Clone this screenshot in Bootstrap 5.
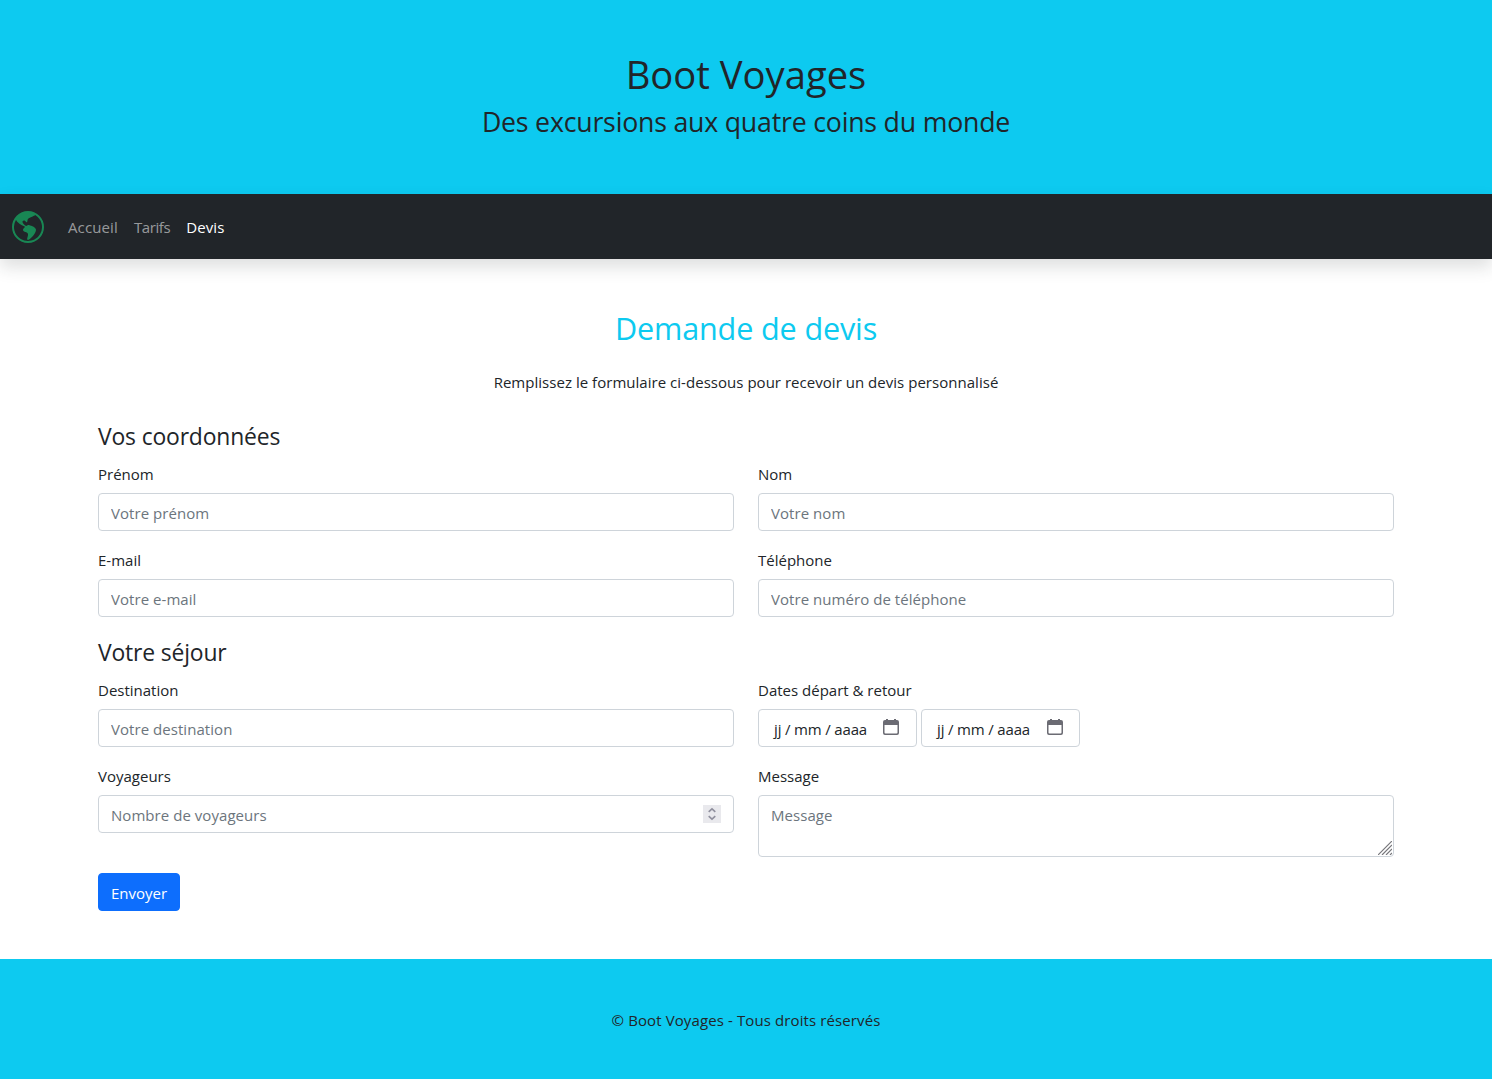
<!DOCTYPE html>
<html lang="fr">
<head>
<meta charset="utf-8">
<meta name="viewport" content="width=device-width, initial-scale=1">
<title>Boot Voyages - Devis</title>
<link href="https://cdn.jsdelivr.net/npm/bootstrap@5.3.0/dist/css/bootstrap.min.css" rel="stylesheet">
<style>
  body { font-family: "Open Sans", "Noto Sans", sans-serif; font-size: 15px; line-height: 24px; color: #212529; overflow-x: hidden; }
  .site-title { font-size: 38.2px; line-height: 44px; padding-top: 4px; font-weight: 400; }
  .site-tagline { font-size: 26.7px; line-height: 30.6px; padding-top: 3px; font-weight: 400; letter-spacing: -.2px; }
  .page-title { font-size: 30.6px; line-height: 34.4px; padding-top: 4px; font-weight: 400; letter-spacing: -.15px; }
  .lead-in, .form-label, .legal { line-height: 22px; padding-top: 2px; }
  .lead-in { letter-spacing: .03px; }
  .legal { letter-spacing: .11px; }
  legend { font-size: 22.9px; line-height: 32px; padding-top: 4px; letter-spacing: -.16px; }
  .site-nav { height: 65px; }
  .site-nav .navbar-brand { margin-top: 1px; }
  .site-nav .nav-link { line-height: 22px; padding-top: 10px; letter-spacing: .12px; }
  .site-nav .nav-tight { letter-spacing: -.4px; }
  .form-control, .btn { font-size: 15px; line-height: 22px; padding: 8px 12px 6px; border-radius: 4px; border-color: #ced4da; }
  .form-control { height: 38px; letter-spacing: .05px; }
  .form-control::placeholder { color: #6c757d; }
  .btn-primary { border-color: #0d6efd; }
  textarea.form-control { height: 62px; min-height: 62px; resize: none; overflow: hidden; }
  .date-box { width: 159px; padding-left: 15px; padding-right: 17px; }
  .date-box svg { margin-top: 1px; }
  .date-box + .date-box { padding-right: 16px; }
  .date-text { letter-spacing: -.16px; }
  .spin-box { right: 13px; top: 10px; }
  .grip-lines { right: 2px; bottom: 2px; }
</style>
<script src="https://cdn.jsdelivr.net/npm/bootstrap@5.3.0/dist/js/bootstrap.bundle.min.js"></script>
</head>
<body>
<header class="bg-info text-center py-5">
  <h1 class="site-title mb-2">Boot Voyages</h1>
  <h2 class="site-tagline mb-2">Des excursions aux quatre coins du monde</h2>
</header>
<nav class="site-nav navbar navbar-expand navbar-dark bg-dark shadow py-0">
  <div class="container-fluid">
    <a class="navbar-brand d-flex p-0 me-3" href="#" aria-label="Accueil">
      <svg width="32" height="32" viewBox="0 0 16 16" fill="#198754"><path d="M8 0a8 8 0 1 0 0 16A8 8 0 0 0 8 0ZM2.04 4.326c.325 1.329 2.532 2.54 3.717 3.19.48.263.793.434.743.484-.08.08-.162.158-.242.234-.416.396-.787.749-.758 1.266.035.634.618.824 1.214 1.017.577.188 1.168.38 1.286.983.082.417-.075.988-.22 1.52-.215.782-.406 1.48.22 1.48 1.5-.5 3.798-3.186 4-5 .138-1.243-2-2-3.5-2.5-.478-.16-.755.081-.99.284-.172.15-.322.279-.51.216-.445-.148-2.5-2-1.5-2.5.78-.39.952-.171 1.227.182.078.099.163.208.273.318.609.304.662-.132.723-.633.039-.322.081-.671.277-.867.434-.434 1.265-.791 2.028-1.12.712-.306 1.365-.587 1.579-.88A7 7 0 1 1 2.04 4.327Z"/></svg>
    </a>
    <ul class="navbar-nav me-auto">
      <li class="nav-item"><a class="nav-link" href="#">Accueil</a></li>
      <li class="nav-item"><a class="nav-link nav-tight" href="#">Tarifs</a></li>
      <li class="nav-item"><a class="nav-link active" href="#">Devis</a></li>
    </ul>
  </div>
</nav>
<main class="container py-5">
  <h2 class="page-title text-info text-center mb-4">Demande de devis</h2>
  <p class="lead-in text-center mb-4">Remplissez le formulaire ci-dessous pour recevoir un devis personnalisé</p>
  <form>
    <fieldset class="row">
      <legend>Vos coordonnées</legend>
      <div class="col-6 mb-3"><label class="form-label d-block" for="prenom">Prénom</label><input class="form-control" id="prenom" type="text" placeholder="Votre prénom"></div>
      <div class="col-6 mb-3"><label class="form-label d-block" for="nom">Nom</label><input class="form-control" id="nom" type="text" placeholder="Votre nom"></div>
      <div class="col-6 mb-3"><label class="form-label d-block" for="email">E-mail</label><input class="form-control" id="email" type="email" placeholder="Votre e-mail"></div>
      <div class="col-6 mb-3"><label class="form-label d-block" for="tel">Téléphone</label><input class="form-control" id="tel" type="tel" placeholder="Votre numéro de téléphone"></div>
    </fieldset>
    <fieldset class="row">
      <legend>Votre séjour</legend>
      <div class="col-6 mb-3"><label class="form-label d-block" for="dest">Destination</label><input class="form-control" id="dest" type="text" placeholder="Votre destination"></div>
      <div class="col-6 mb-3">
        <label class="form-label d-block">Dates départ &amp; retour</label>
        <div class="d-flex gap-1">
          <div class="form-control date-box d-flex justify-content-between"><span class="date-text">jj / mm / aaaa</span>
            <svg width="16" height="16" viewBox="0 0 16 16"><path d="M3 0h2v1h6V0h2v1h1a2 2 0 0 1 2 2v11a2 2 0 0 1-2 2H2a2 2 0 0 1-2-2V3a2 2 0 0 1 2-2h1zM1.5 6v7.5a1 1 0 0 0 1 1h11a1 1 0 0 0 1-1V6z" fill="#6b6b73" fill-rule="evenodd"/></svg></div>
          <div class="form-control date-box d-flex justify-content-between"><span class="date-text">jj / mm / aaaa</span>
            <svg width="16" height="16" viewBox="0 0 16 16"><path d="M3 0h2v1h6V0h2v1h1a2 2 0 0 1 2 2v11a2 2 0 0 1-2 2H2a2 2 0 0 1-2-2V3a2 2 0 0 1 2-2h1zM1.5 6v7.5a1 1 0 0 0 1 1h11a1 1 0 0 0 1-1V6z" fill="#6b6b73" fill-rule="evenodd"/></svg></div>
        </div>
      </div>
      <div class="col-6 mb-3"><label class="form-label d-block" for="voy">Voyageurs</label>
        <div class="position-relative"><input class="form-control" id="voy" type="text" inputmode="numeric" placeholder="Nombre de voyageurs">
          <svg class="spin-box position-absolute" width="18" height="18" viewBox="0 0 18 18"><path d="M0 0h18v18H0z" fill="#e9e9ed"/><path d="M5.7 6.8 9 3.8l3.3 3M5.7 11.2l3.3 3 3.3-3" fill="none" stroke="#8f8f9d" stroke-width="1.6"/></svg></div>
      </div>
      <div class="col-6 mb-3"><label class="form-label d-block" for="msg">Message</label>
        <div class="position-relative"><textarea class="form-control" id="msg" placeholder="Message"></textarea>
          <svg class="grip-lines position-absolute" width="14" height="14" viewBox="0 0 14 14"><path d="M0 14 14 0M4 14 14 4M8 14l6-6M12 14l2-2" stroke="#77777b" stroke-width="1.2"/></svg></div>
      </div>
    </fieldset>
    <button type="button" class="btn btn-primary d-block">Envoyer</button>
  </form>
</main>
<footer class="bg-info text-center py-5"><p class="legal mb-0">© Boot Voyages - Tous droits réservés</p></footer>
</body>
</html>
